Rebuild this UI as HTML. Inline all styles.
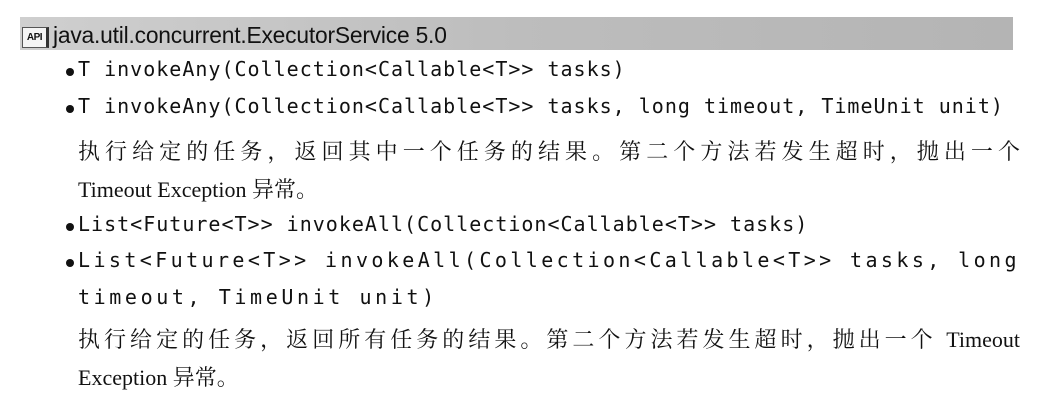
<!DOCTYPE html>
<html><head><meta charset="utf-8"><style>
body{margin:0;width:1060px;height:417px;background:#fff;position:relative;overflow:hidden;color:#111}
.bar{position:absolute;left:20px;top:17px;width:993px;height:33px;background:linear-gradient(90deg,#cfcfcf,#bdbdbd 50%,#b4b4b4)}
.api{position:absolute;left:22px;top:27px;width:27px;height:21px;background:#f4f4f4;border:1px solid #555;border-right:3px solid #333;font:bold 10px "Liberation Sans",sans-serif;line-height:19px;text-align:center;letter-spacing:-0.5px;box-sizing:border-box}
.title{position:absolute;left:53px;top:22px;font:22.8px "Liberation Sans",sans-serif;color:#111;letter-spacing:-0.2px}
.l{position:absolute;left:78px;white-space:nowrap;line-height:30px;height:30px}
.m{font:20px "DejaVu Sans Mono","Liberation Mono",monospace;letter-spacing:1px}
.c{font:22px "Liberation Serif","Noto Serif CJK SC",serif}
.j{width:942px;text-align:justify;text-align-last:justify;white-space:normal}
.b{position:absolute;left:-12px;top:11px;width:8px;height:8px;border-radius:50%;background:#111}
</style></head><body>
<div class="bar"></div><div class="api">API</div>
<div class="title">java.util.concurrent.ExecutorService 5.0</div>
<div class="l m" style="top:57px"><span class="b"></span>T invokeAny(Collection&lt;Callable&lt;T&gt;&gt; tasks)</div>
<div class="l m" style="top:94px"><span class="b"></span>T invokeAny(Collection&lt;Callable&lt;T&gt;&gt; tasks, long timeout, TimeUnit unit)</div>
<div class="l c j" style="top:135px">执行给定的任务，返回其中一个任务的结果。第二个方法若发生超时，抛出一个</div>
<div class="l c" style="top:173px">Timeout Exception 异常。</div>
<div class="l m" style="top:212px"><span class="b"></span>List&lt;Future&lt;T&gt;&gt; invokeAll(Collection&lt;Callable&lt;T&gt;&gt; tasks)</div>
<div class="l m" style="top:248px;letter-spacing:3.4px"><span class="b"></span>List&lt;Future&lt;T&gt;&gt; invokeAll(Collection&lt;Callable&lt;T&gt;&gt; tasks, long</div>
<div class="l m" style="top:285px;letter-spacing:3.6px">timeout, TimeUnit unit)</div>
<div class="l c j" style="top:323px">执行给定的任务，返回所有任务的结果。第二个方法若发生超时，抛出一个 Timeout</div>
<div class="l c" style="top:361px">Exception 异常。</div>
</body></html>
